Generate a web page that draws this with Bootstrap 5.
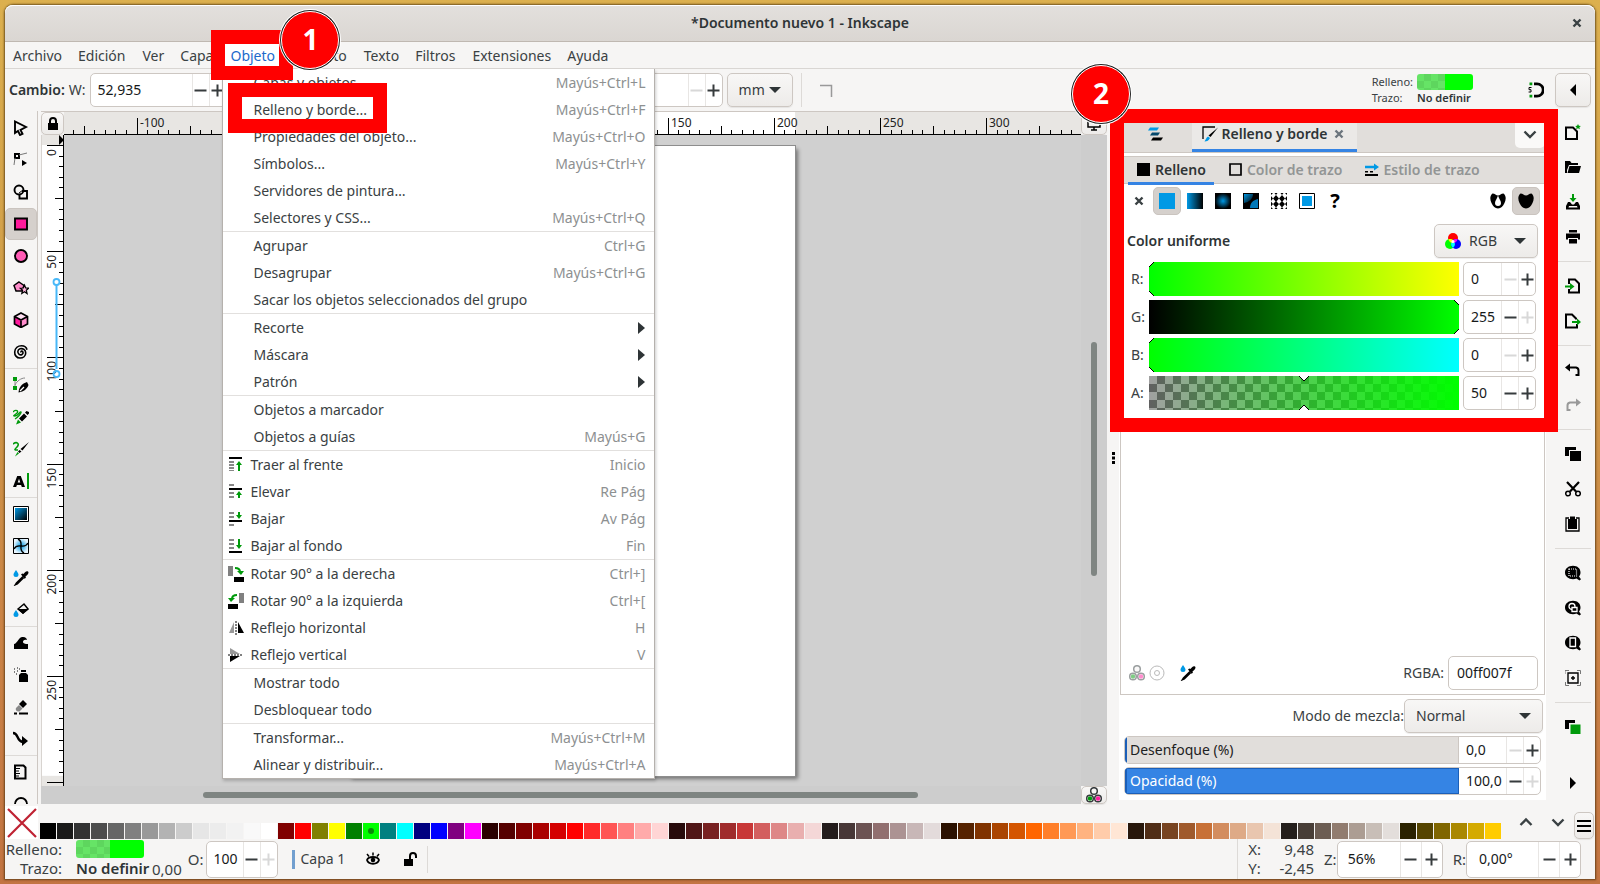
<!DOCTYPE html>
<html lang="es">
<head>
<meta charset="utf-8">
<meta name="viewport" content="width=device-width, initial-scale=1">
<title>*Documento nuevo 1 - Inkscape</title>
<link href="https://cdn.jsdelivr.net/npm/bootstrap@5.3.0/dist/css/bootstrap.min.css" rel="stylesheet">
<style>
  :root { --ink:#3a4143; --line:#cdc7c2; --soft:#dddad7; --bg:#f6f5f4; --blue:#3584e4; --call:#ff0000; }
  body { height:100vh; padding:5px; overflow:hidden; font-family:"Noto Sans",sans-serif; font-size:14px; line-height:20px; color:var(--ink);
    background:linear-gradient(180deg,#dcb04e 0%,#cf9a48 40%,#cb8446 70%,#c27442 100%); }
  button { padding:0; border:0; background:none; color:inherit; }
  svg { display:block; flex:none; }
  a { color:inherit; text-decoration:none; }
  .strong { font-weight:600; color:#2e3436; }
  .ico { width:16px; height:16px; }
  .win { background:var(--bg); border-radius:8px 8px 0 0; box-shadow:0 0 2px 1px rgba(70,45,10,.7); }
  .titlebar { height:37px; border-bottom:1px solid #bfb8b1; background:linear-gradient(#e3e0dd,#dad6d2); border-radius:8px 8px 0 0; box-shadow:inset 0 1px #fff; }
  .titlebar .closer { right:10px; top:10px; }
  .menubar { height:27px; border-bottom:1px solid #d9d6d3; }
  .menubar > div > a { display:block; padding:0 8px; height:26px; line-height:27px; }
  .menubar > div:nth-child(2n) > a { padding-right:9px; }
  .menubar .opened > a { color:#1b6acb; background:#fff; }
  .toolopts { height:42px; }
  .spin { background:#fff; border:1px solid var(--line); border-radius:5px; overflow:hidden; color:#000; height:34px; flex:none; }
  .spin input { border:0; outline:0; background:none; flex:1 1 0; width:0; min-width:0; padding:0 0 0 7px; color:#16191a; }
  .spin button { width:17px; border-left:1px solid #e8e6e4; flex:none; display:flex; align-items:center; justify-content:center; color:#363b3d; }
  .spin button:disabled { color:#d8d8d8; }
  .spin button svg { width:13px; height:13px; }
  .spin.wide button { width:21px; }
  .raised { background:linear-gradient(#f8f7f6,#edebe9); border:1px solid var(--line); border-radius:5px; box-shadow:0 1px 1px rgba(0,0,0,.07); color:#363b3d; }
  select.raised { appearance:none; height:34px; outline:0;
    background:url("data:image/svg+xml,%3Csvg xmlns='http://www.w3.org/2000/svg' width='12' height='6'%3E%3Cpath d='M0 0h12l-6 6z' fill='%232e3436'/%3E%3C/svg%3E") no-repeat right 11px center, linear-gradient(#f8f7f6,#edebe9); }
  select.unit { width:66px; padding:0 11px; }
  .vsep { width:1px; background:var(--soft); }
  .hsep { height:1px; background:var(--soft); flex:none; }
  .tiny { font-size:11px; line-height:16px; }
  .swatch2 { border-radius:3px; overflow:hidden; }
  .swatch2 > span { flex:1; background:#00ff00; }
  .swatch2 > span:first-child { background:conic-gradient(#5ed65e 25%,#66e466 0 50%,#5ed65e 0 75%,#66e466 0) 0 0/14px 14px; }
  /* tool columns */
  .toolbox { width:33px; border-right:1px solid var(--line); overflow:hidden; padding-top:1px; }
  .toolbox button { height:32px; width:32px; flex:none; display:flex; align-items:center; justify-content:center; }
  .toolbox .picked { background:#d5d0cc; border:1px solid #cac4bf; border-radius:5px; }
  .commands { width:49px; padding:3px 4px 0 9px; }
  .commands button { height:35px; display:flex; align-items:center; justify-content:center; flex:none; }
  .commands .hsep { margin:7px 0 6px; }
  /* canvas */
  .sheet { display:grid; grid-template-columns:23px 1fr 26px; grid-template-rows:23px 1fr 18px; border-top:1px solid var(--line); margin-left:3px; min-width:0; }
  .sheet > * { min-width:0; min-height:0; overflow:hidden; }
  .ruler { background:#e8e6e3; }
  .ruler svg { width:100%; height:100%; }
  .ruler text { font-size:12px; fill:#222; }
  .rtop { border-bottom:1px solid #000; }
  .rleft { border-right:1px solid #000; border-left:1px solid #d8d4d0; }
  .board { background:#d0d0d0; position:relative; }
  .paper { position:absolute; left:285px; top:11px; width:446px; height:630px; background:#fff; outline:1px solid #8d8d8d; box-shadow:3px 3px 4px rgba(0,0,0,.45); }
  .strip { background:#cdcdcd; }
  .thumb { background:#7f8582; border-radius:3px; }
  /* object menu */
  .popmenu { position:absolute; left:0; top:27px; width:433px; z-index:20; background:#fff; border:1px solid #b5b1ad; border-top:0; box-shadow:1px 2px 3px rgba(0,0,0,.2); }
  .popmenu a { display:flex; align-items:center; height:27px; padding:0 9px 0 30px; position:relative; }
  .popmenu a.pic { padding-left:5px; gap:6px; }
  .popmenu kbd { margin-left:auto; font:inherit; background:none; color:#8d9091; padding:0; }
  .popmenu hr { margin:0; border:0; height:1px; background:#e2e0de; opacity:1; }
  /* callouts */
  .frame { position:absolute; border:14px solid var(--call); pointer-events:none; z-index:30; }
  .disc { position:absolute; width:58px; height:58px; border-radius:50%; background:var(--call); color:#fff; font:700 28px/54px "Noto Sans",sans-serif; text-align:center; border:1px solid #fff; box-shadow:0 0 0 1px #222,0 0 0 2px #fff; z-index:40; }
  /* dock */
  .dock { width:427px; background:#fff; position:relative; }
  .tabs1 { height:42px; background:#e1dedb; border-bottom:1px solid var(--line); }
  .tabs1 .on { width:165px; background:#ebe9e7; box-shadow:inset 0 -3px var(--blue); padding-top:5px; }
  .tabs2 { height:28px; margin-top:3px; padding-left:7px; background:#e1dedb; border-bottom:1px solid var(--line); border-top:1px solid var(--line); }
  .tabs2 button { color:#929595; display:flex; align-items:center; gap:3px; padding:0 8px 0 14px; }
  .tabs2 .on { color:#2e3436; padding:0 8px; box-shadow:0 2px var(--blue),inset 0 -1px var(--blue); }
  .panel { border:1px solid var(--line); border-top:0; margin:0 1px; }
  .paint { margin-top:3px; }
  .paint button { width:28px; height:28px; display:flex; align-items:center; justify-content:center; }
  .paint .picked { background:#d5d0cc; border-radius:5px; border:1px solid #cac4bf; }
  .chan { height:34px; flex:1; overflow:hidden; min-width:0; }
  .chan input { appearance:none; display:block; width:calc(100% + 12px); margin:0 -6px; height:34px; background:none; outline:0; }
  .chan input::-webkit-slider-thumb { appearance:none; width:12px; height:34px; background:url("data:image/svg+xml,%3Csvg xmlns='http://www.w3.org/2000/svg' width='12' height='34'%3E%3Cpath d='M.5-.5h11L6 5zM.5 34.5h11L6 29z' fill='%23fff' stroke='%23000'/%3E%3C/svg%3E"); }
  .chan input::-moz-range-thumb { width:12px; height:34px; border:0; background:none; }
  .c-r { background:linear-gradient(90deg,#0f0,#ff0); } .c-g { background:linear-gradient(90deg,#000,#0f0); }
  .c-b { background:linear-gradient(90deg,#0f0,#0ff); }
  .c-a { background:linear-gradient(90deg,rgba(0,255,0,0),#0f0),conic-gradient(#606060 25%,#a0a0a0 0 50%,#606060 0 75%,#a0a0a0 0) 0 0/16px 16px; }
  .bars { padding:3px 5px 5px 5px; gap:3px; }
  .spin.bar { height:28px; }
  .bar label { flex:1; padding-left:3px; line-height:25px; background:#e1dedb; border-left:2px solid #1b5fb8; border-right:1px solid var(--line); color:#1d2122; }
  .bar.full label { background:var(--blue); color:#fff; outline:1px solid #1b5fb8; outline-offset:-1px; border-color:#1b5fb8; }
  .bar input { flex:0 0 47px; }
  /* palette + status */
  .palette { height:35px; }
  .palette .none { width:33px; height:33px; background:#fff; }
  .chips { gap:1px; margin-left:2px; }
  .chips button { width:16px; height:16px; position:relative; flex:none; }
  .chips .cur::after { content:""; position:absolute; left:5px; top:5px; width:6px; height:6px; border-radius:50%; background:#0a8a0a; }
  .status { height:40px; }
  .status .spin { height:37px; }
  .two { line-height:19px; font-size:15px; }
  .names { width:57px; }
  .indic { width:76px; }
</style>
</head>
<body>
<svg width="0" height="0" class="position-absolute" aria-hidden="true">
  <defs>
    <linearGradient id="gB"><stop offset="0" stop-color="#0099e5"/><stop offset="1" stop-color="#000"/></linearGradient>
    <linearGradient id="gD" x2="1" y2="1"><stop offset="0" stop-color="#0099e5"/><stop offset="1" stop-color="#000"/></linearGradient>
    <radialGradient id="gR"><stop offset="0" stop-color="#0099e5"/><stop offset="1" stop-color="#000"/></radialGradient>
    <radialGradient id="gM"><stop offset="0" stop-color="#0099e5"/><stop offset="1" stop-color="#e8f6ff"/></radialGradient>
    <symbol id="minus" viewBox="0 0 13 13"><path d="M.5 5.500h12v2H.5z" fill="currentColor"/></symbol>
    <symbol id="plus" viewBox="0 0 13 13"><path d="M.5 5.500h5v-5h2v5h5v2h-5v5h-2v-5h-5z" fill="currentColor"/></symbol>
    <symbol id="cross" viewBox="0 0 16 16"><path d="M4.500 4.500l7 7m0-7l-7 7" stroke="currentColor" stroke-width="2.400"/></symbol>
    <symbol id="chevd" viewBox="0 0 16 16"><path d="M2.500 5.500L8 11l5.500-5.500" fill="none" stroke="currentColor" stroke-width="2.400"/></symbol>
    <symbol id="chevu" viewBox="0 0 16 16"><path d="M2.500 11L8 5.500 13.500 11" fill="none" stroke="currentColor" stroke-width="2.400"/></symbol>
    <symbol id="dropper" viewBox="0 0 16 16"><path d="M3 0c1.500 2.200 2.500 3.300 2.500 4.600a2.500 2.500 0 0 1-5 0C.5 3.300 1.500 2.200 3 0z" fill="#0099e5"/><path d="M10 6.500L3.500 13l-1 1.600 1.800-.8L10.800 7.500" fill="#fff" stroke="#000" stroke-width="1.600"/><path d="M8 4.500l1.300-1 1 .6C11.500 2.500 13 .8 14.500 1.200c1.800.8.800 2.800-.3 3.800l-1.700 1.600.4 1.200-1.300 1z"/></symbol>
    <symbol id="cms" viewBox="0 0 16 16"><g stroke-width="1.500" stroke="currentColor"><circle cx="8" cy="4" r="3.300" fill="#f6f5f4"/><circle cx="4" cy="11.500" r="3.300" fill="#fff"/><circle cx="12" cy="11.500" r="3.300" fill="#fff"/></g><circle cx="4" cy="11.500" r="2.200" fill="#009a0b"/><circle cx="12" cy="11.500" r="2.200" fill="#ff1a9c"/></symbol>
    <symbol id="mag" viewBox="0 0 16 16"><path d="M8 .8C3.500.8 0 3.600 0 7.500s3.500 6.700 8 6.700c1.300 0 2.500-.2 3.500-.7l3 2 1.500-1.300-2-2.700c1.200-1.200 1.500-2.500 1.500-4C15.500 3.600 12.500.8 8 .8z"/></symbol>
  </defs>
</svg>

<div class="win d-flex flex-column h-100 position-relative">
  <header class="titlebar d-flex align-items-center justify-content-center position-relative flex-shrink-0">
    <span class="strong">*Documento nuevo 1 - Inkscape</span>
    <button class="closer position-absolute" aria-label="Cerrar"><svg class="ico"><use href="#cross"/></svg></button>
  </header>

  <nav class="menubar d-flex flex-shrink-0" aria-label="Menú principal">
    <div><a href="#">Archivo</a></div>
    <div><a href="#">Edición</a></div>
    <div><a href="#">Ver</a></div>
    <div><a href="#">Capa</a></div>
    <div class="opened position-relative"><a href="#">Objeto</a>
      <div class="popmenu" id="popmenu"></div>
      <div class="frame" style="left:-11px;top:-12px;width:82px;height:50px"></div>
      <div class="disc" style="left:59px;top:-31px">1</div>
    </div>
    <div><a href="#">Trayecto</a></div>
    <div><a href="#">Texto</a></div>
    <div><a href="#">Filtros</a></div>
    <div><a href="#">Extensiones</a></div>
    <div><a href="#">Ayuda</a></div>
  </nav>

  <div class="toolopts d-flex align-items-center flex-shrink-0 ps-1">
    <span class="strong me-1">Cambio:</span><label for="w">W:</label>
    <div class="spin d-flex ms-1" style="width:137px"><input id="w" value="52,935"><button aria-label="Menos"><svg><use href="#minus"/></svg></button><button aria-label="Más"><svg><use href="#plus"/></svg></button></div>
    <div class="spin d-flex" style="width:137px;margin-left:359px"><input aria-label="Ry" value=""><button disabled aria-label="Menos"><svg><use href="#minus"/></svg></button><button aria-label="Más"><svg><use href="#plus"/></svg></button></div>
    <select class="raised unit ms-1" aria-label="Unidad"><option>mm</option></select>
    <div class="vsep ms-2 align-self-stretch my-1"></div>
    <button class="ms-3" aria-label="Sin redondeo"><svg class="ico" viewBox="0 0 16 16"><path d="M2 3.500h11.500V15" fill="none" stroke="#999" stroke-width="1.500"/></svg></button>
    <div class="ms-auto d-flex align-items-center">
      <div class="tiny me-1"><div>Relleno:</div><div>Trazo:</div></div>
      <div class="tiny"><div class="swatch2 d-flex" style="width:56px;height:16px"><span></span><span></span></div><div class="strong">No definir</div></div>
      <svg class="ico" style="margin:0 11px 0 55px" viewBox="0 0 16 16"><path d="M6 1.800H9a6.200 6.200 0 0 1 0 12.400H6" fill="none" stroke="#000" stroke-width="2.800"/><path d="M1.500.4h2.800v2.800H1.500zM1.500 12.800h2.800v2.800H1.500z" fill="#009a0b"/><path d="M3.500 5.500H1v2.200h2V10H.6" fill="none" stroke="#000"/></svg>
      <button class="raised d-flex align-items-center justify-content-center" style="width:36px;height:34px;margin-right:4px" aria-label="Plegar"><svg width="6" height="12"><path d="M6 0v12L0 6z"/></svg></button>
    </div>
  </div>

  <main class="d-flex flex-grow-1" style="min-height:0">
    <div class="toolbox d-flex flex-column flex-shrink-0" id="toolbox"></div>

    <section class="sheet flex-grow-1">
      <button class="raised d-flex align-items-center justify-content-center" aria-label="Bloquear guías"><svg class="ico" viewBox="0 0 16 16"><path d="M3 7h10v7H3z"/><path d="M5 7V5a3 3 0 0 1 6 0v2" fill="none" stroke="#000" stroke-width="2"/></svg></button>
      <div class="ruler rtop"><svg id="rtop"></svg></div>
      <button class="raised d-flex align-items-center justify-content-center" aria-label="Modo de vista"><svg class="ico" viewBox="0 0 16 16"><path d="M2 3h12v8H2zM5 14h6M8 11v3" fill="none" stroke="#000" stroke-width="1.500"/></svg></button>
      <div class="ruler rleft position-relative"><svg id="rleft"></svg></div>
      <div class="board"><div class="paper"></div></div>
      <div class="strip d-flex justify-content-center"><div class="thumb" style="width:6px;height:234px;margin-top:207px"></div></div>
      <div class="strip"></div>
      <div class="strip d-flex"><div class="thumb" style="width:715px;height:6px;margin:6px 0 0 139px"></div></div>
      <button class="raised d-flex align-items-center justify-content-center" aria-label="Gestión de color"><svg class="ico"><use href="#cms"/></svg></button>
    </section>

    <div class="d-flex align-items-center justify-content-center flex-shrink-0" style="width:12px"><svg width="3" height="12"><path d="M0 0h3v3H0zM0 4.500h3v3H0zM0 9h3v3H0z"/></svg></div>

    <aside class="dock d-flex flex-column flex-shrink-0 mb-1">
      <div class="tabs1 d-flex flex-shrink-0">
        <button class="d-flex align-items-center justify-content-center pt-1" style="width:73px" aria-label="Capas"><svg class="ico" viewBox="0 0 16 16"><path d="M2 1.500h9l-2 3H0z" fill="#0099e5"/><path d="M4 6.500h8l-2 3H2z" fill="#05496d"/><path d="M5 11.500h10l-2 3H3z"/></svg></button>
        <button class="on d-flex align-items-center justify-content-center strong"><svg class="ico me-1" viewBox="0 0 16 16"><path d="M1 13V1h12" fill="none" stroke="#000" stroke-width="1.300"/><path d="M16 1.500L8.500 11 6.500 9.500z"/><path d="M6 10.500l2 1.500c-1 2.500-3 3.500-5.500 3.500C4 13.500 4 11.500 6 10.500z" fill="#0099e5"/></svg>Relleno y borde<svg class="ico ms-1 text-secondary"><use href="#cross"/></svg></button>
        <button class="ms-auto d-flex align-items-center justify-content-center" style="width:30px;margin-right:1px;background:#faf9f8;border-radius:5px;height:37px" aria-label="Diálogos"><svg class="ico mt-2"><use href="#chevd"/></svg></button>
      </div>
      <div class="panel d-flex flex-column flex-grow-1">
        <div class="tabs2 d-flex align-items-stretch flex-shrink-0">
          <button class="on strong"><svg class="ico" viewBox="0 0 16 16"><path d="M1 1h13v13H1z"/></svg>Relleno</button>
          <button class="fw-semibold"><svg class="ico" viewBox="0 0 16 16"><path d="M2 2h11v11H2z" fill="none" stroke="#000" stroke-width="1.700"/></svg>Color de trazo</button>
          <button class="fw-semibold"><svg class="ico" viewBox="0 0 16 16"><path d="M1 3.800h9V1.500l5 3.500-5 3.500V6.200H1z" fill="#0099e5"/><path d="M1 9h3v1.500H1zM6 9h3v1.500H6zM1 12h13v2H1z"/></svg>Estilo de trazo</button>
        </div>
        <div class="paint d-flex px-1">
          <button aria-label="Sin pintura"><svg class="ico"><use href="#cross"/></svg></button>
          <button class="picked" aria-label="Color uniforme"><svg class="ico"><path d="M0 0h16v16H0z" fill="#0099e5"/></svg></button>
          <button aria-label="Degradado lineal"><svg class="ico"><path d="M0 0h16v16H0z" fill="url(#gB)"/></svg></button>
          <button aria-label="Degradado radial"><svg class="ico"><path d="M0 0h16v16H0z" fill="url(#gR)"/></svg></button>
          <button aria-label="Malla"><svg class="ico"><path d="M0 0h16v16H0z"/><path d="M1 1h9c0 5-4 8-9 9z" fill="url(#gD)"/><path d="M15 6v9H7c0-5 3-8 8-9z" fill="#0077b8"/></svg></button>
          <button aria-label="Patrón"><svg class="ico"><path d="M0 0h2L0 2zM3.500 0h3L5 2zM9.500 0h3L11 2zM14 0h2v2zM5 2l3 3.500L5 9 2 5.500zM11 2l3 3.500L11 9 8 5.500zM0 3l2 2.500L0 8zM16 3l-2 2.500L16 8zM5 8l3 3-3 3.500L2 11zM11 8l3 3-3 3.500L8 11zM0 8.500L2 11l-2 2.500zM16 8.500L14 11l2 2.500zM0 14l2 2H0zM16 14l-2 2h2zM5 14l1.500 2h-3zM11 14l1.500 2h-3z"/></svg></button>
          <button aria-label="Muestra"><svg class="ico"><path d="M.5.5h15v15H.5z" fill="#fff" stroke="#000"/><path d="M3 3h10v10H3z" fill="#0099e5"/></svg></button>
          <button class="fw-bold text-black fs-5" aria-label="Sin definir">?</button>
          <button class="ms-auto" aria-label="Par-impar"><svg class="ico"><path d="M2.500.5C5 .5 6 2.500 8 2.500S11 .5 13.500.5c3 2.500 2.500 6.500 1 9.500S11 15.500 8 15.500 3 13 1.500 10-.5 3 2.500.5z"/><path d="M8 2.500C7 6 5 7.500 5 10a3 3 0 0 0 6 0c0-2.500-2-4-3-7.500z" fill="#fff"/></svg></button>
          <button class="picked" aria-label="No nulo"><svg class="ico"><path d="M2.500.5C5 .5 6 2.500 8 2.500S11 .5 13.500.5c3 2.500 2.500 6.500 1 9.500S11 15.500 8 15.500 3 13 1.500 10-.5 3 2.500.5z"/></svg></button>
        </div>
        <div class="d-flex align-items-center justify-content-between mb-1" style="padding:9px 6px 0">
          <span class="strong">Color uniforme</span>
          <div class="position-relative"><svg class="ico position-absolute" style="left:11px;top:9px" viewBox="0 0 16 16"><circle cx="8" cy="5" r="5" fill="#f00"/><circle cx="5" cy="11" r="5" fill="#0f0"/><circle cx="11" cy="11" r="5" fill="#00f"/><path d="M8 7a5 5 0 0 1 0 8 5 5 0 0 1 0-8z" fill="#0ff"/><path d="M8 7a5 5 0 0 1 4.600-.7A5 5 0 0 1 8 10z" fill="#f0f"/><path d="M8 7a5 5 0 0 0-4.600-.7A5 5 0 0 0 8 10z" fill="#ff0"/><circle cx="8" cy="8.500" r="1.500" fill="#fff"/></svg>
            <select class="raised" style="width:104px;padding:0 0 0 34px" aria-label="Modo de color"><option>RGB</option></select></div>
        </div>
        <div class="d-flex flex-column gap-1" style="padding:0 8px 0 10px" id="chans"></div>
        <div class="d-flex align-items-center mt-auto mb-1 ps-2" style="padding-right:6px">
          <svg class="ico opacity-50 me-1"><use href="#cms"/></svg>
          <svg class="ico opacity-50" viewBox="0 0 16 16" fill="none" stroke="#777"><circle cx="8" cy="8" r="7"/><circle cx="8" cy="8" r="2.500"/></svg>
          <button style="margin-left:15px" aria-label="Cuentagotas"><svg class="ico"><use href="#dropper"/></svg></button>
          <label class="ms-auto me-1" for="rgba">RGBA:</label>
          <div class="spin d-flex" style="width:90px"><input id="rgba" class="ps-2" value="00ff007f"></div>
        </div>
      </div>
      <div class="d-flex align-items-center justify-content-end mt-1" style="padding-right:3px"><label for="blend">Modo de mezcla:</label><select id="blend" class="raised" style="width:139px;padding:0 0 0 11px"><option>Normal</option></select></div>
      <div class="bars d-flex flex-column">
        <div class="spin bar d-flex"><label for="blur">Desenfoque (%)</label><input id="blur" value="0,0"><button disabled aria-label="Menos"><svg><use href="#minus"/></svg></button><button aria-label="Más"><svg><use href="#plus"/></svg></button></div>
        <div class="spin bar full d-flex"><label for="opac">Opacidad (%)</label><input id="opac" value="100,0"><button aria-label="Menos"><svg><use href="#minus"/></svg></button><button disabled aria-label="Más"><svg><use href="#plus"/></svg></button></div>
      </div>
      <div class="frame" style="left:-9px;top:-2px;width:448px;height:323px"></div>
      <div class="disc" style="left:-47px;top:-46px">2</div>
    </aside>

    <div class="commands d-flex flex-column flex-shrink-0" id="commands"></div>
  </main>

  <div class="palette d-flex flex-shrink-0 align-items-end">
    <button class="none" aria-label="Ninguno"><svg width="33" height="33"><path d="M3 3l28 28M31 3L3 31" stroke="#bf2233" stroke-width="2.200"/></svg></button>
    <div class="chips d-flex" id="chips"></div>
    <div class="d-flex ms-auto align-self-center gap-3"><button aria-label="Arriba"><svg class="ico"><use href="#chevu"/></svg></button><button aria-label="Abajo"><svg class="ico"><use href="#chevd"/></svg></button></div>
    <button class="raised ms-2 d-flex align-items-center justify-content-center" style="width:20px;height:27px;margin-right:1px" aria-label="Menú de paleta"><svg width="14" height="14"><path d="M0 1h14v2H0zM0 6h14v2H0zM0 11h14v2H0z"/></svg></button>
  </div>

  <footer class="status d-flex align-items-center flex-shrink-0">
    <div class="names two text-end"><div>Relleno:</div><div>Trazo:</div></div>
    <div class="indic two" style="margin-left:14px"><div class="swatch2 d-flex" style="width:68px;height:18px;margin-bottom:1px"><span></span><span></span></div><div class="strong text-nowrap">No definir</div></div>
    <span class="two align-self-end">0,00</span>
    <label class="two" style="margin-left:6px" for="op">O:</label>
    <div class="spin d-flex" style="width:72px;margin-left:2px"><input id="op" value="100"><button aria-label="Menos"><svg><use href="#minus"/></svg></button><button disabled aria-label="Más"><svg><use href="#plus"/></svg></button></div>
    <span style="width:3px;height:19px;background:#729fcf;margin:0 6px 0 14px"></span><span>Capa 1</span>
    <button style="margin-left:20px" aria-label="Visible"><svg class="ico" viewBox="0 0 16 16"><path d="M2 9c1.500-4 10.500-4 12 0-1.500 5-10.500 5-12 0z" fill="none" stroke="#000" stroke-width="1.800"/><circle cx="8" cy="9" r="2.300"/><path d="M2 3l2 2.500M8 1.500v3M14 3l-2 2.500" stroke="#000" stroke-width="1.500"/></svg></button>
    <button style="margin-left:21px" aria-label="Desbloqueada"><svg class="ico" viewBox="0 0 16 16"><path d="M2 8h9v7H2z"/><path d="M8 8V5a3 3 0 0 1 6 0v2" fill="none" stroke="#000" stroke-width="2"/></svg></button>
    <div class="vsep my-1" style="height:27px;margin-left:9px"></div>
    <div class="vsep ms-auto align-self-stretch"></div>
    <div class="two" style="margin-left:10px"><div>X:</div><div>Y:</div></div>
    <div class="two text-end" style="width:53px"><div>9,48</div><div>-2,45</div></div>
    <label class="two" style="margin-left:10px" for="z">Z:</label>
    <div class="spin wide d-flex" style="width:106px"><input id="z" value="56%" style="padding-left:10px"><button aria-label="Menos"><svg><use href="#minus"/></svg></button><button aria-label="Más"><svg><use href="#plus"/></svg></button></div>
    <label class="two" style="margin-left:10px" for="rot">R:</label>
    <div class="spin wide d-flex" style="width:115px;margin-right:14px"><input id="rot" value="0,00°" style="padding-left:12px"><button aria-label="Menos"><svg><use href="#minus"/></svg></button><button aria-label="Más"><svg><use href="#plus"/></svg></button></div>
  </footer>
</div>

<script>
const svg = (inner, cls = 'ico') => `<svg class="${cls}" viewBox="0 0 16 16">${inner}</svg>`;
const G = '#009a0b', P = '#ff1a9c';

// Object menu
const pics = {
  front: `<path d="M1 0h13v2H1z"/><path d="M1 4h5v2H1zM1 7h5v2H1zM1 10h5v2H1zM1 13h5v1H1z" fill="#888"/><path d="M10 14V8H8l3-4 3 4h-2v6z" fill="${G}"/>`,
  up: `<path d="M1 4h13v2H1z"/><path d="M1 0h5v2H1zM1 8h5v2H1zM1 12h5v2H1z" fill="#888"/><path d="M10 14v-3H8l3-4 3 4h-2v3z" fill="${G}"/>`,
  down: `<path d="M1 9h13v2H1z"/><path d="M1 1h5v2H1zM1 5h5v2H1zM1 13h5v2H1z" fill="#888"/><path d="M10 1v3H8l3 4 3-4h-2V1z" fill="${G}"/>`,
  back: `<path d="M1 13h13v2H1z"/><path d="M1 1h5v2H1zM1 5h5v2H1zM1 9h5v2H1z" fill="#888"/><path d="M10 1v6H8l3 4 3-4h-2V1z" fill="${G}"/>`,
  cw: `<path d="M0 0h5v10H0z" fill="#808080"/><path d="M6 11h10v5H6z"/><path d="M7 2c4 0 5 2 5 4" fill="none" stroke="${G}" stroke-width="2"/><path d="M9 5h7l-3 4z" fill="${G}"/>`,
  ccw: `<path d="M11 0h5v10h-5z" fill="#808080"/><path d="M0 11h10v5H0z"/><path d="M9 2C5 2 4 4 4 6" fill="none" stroke="${G}" stroke-width="2"/><path d="M0 5h7L3 9z" fill="${G}"/>`,
  fh: `<path d="M6 2v11H1z" fill="#999"/><path d="M10 2v11h6z"/><path d="M8 1v14" stroke="#000" stroke-dasharray="2 1"/>`,
  fv: `<path d="M2 1v6h10z" fill="#999"/><path d="M2 9h10L2 15z"/><path d="M0 8h14" stroke="#000" stroke-dasharray="2 1"/>`
};
const menu = [
  ['Capas y objetos...', 'Mayús+Ctrl+L'], ['Relleno y borde...', 'Mayús+Ctrl+F'], ['Propiedades del objeto...', 'Mayús+Ctrl+O'],
  ['Símbolos...', 'Mayús+Ctrl+Y'], ['Servidores de pintura…', ''], ['Selectores y CSS...', 'Mayús+Ctrl+Q'], 0,
  ['Agrupar', 'Ctrl+G'], ['Desagrupar', 'Mayús+Ctrl+G'], ['Sacar los objetos seleccionados del grupo', ''], 0,
  ['Recorte', '>'], ['Máscara', '>'], ['Patrón', '>'], 0,
  ['Objetos a marcador', ''], ['Objetos a guías', 'Mayús+G'], 0,
  ['Traer al frente', 'Inicio', 'front'], ['Elevar', 'Re Pág', 'up'], ['Bajar', 'Av Pág', 'down'], ['Bajar al fondo', 'Fin', 'back'], 0,
  ['Rotar 90° a la derecha', 'Ctrl+]', 'cw'], ['Rotar 90° a la izquierda', 'Ctrl+[', 'ccw'], ['Reflejo horizontal', 'H', 'fh'], ['Reflejo vertical', 'V', 'fv'], 0,
  ['Mostrar todo', ''], ['Desbloquear todo', ''], 0,
  ['Transformar...', 'Mayús+Ctrl+M'], ['Alinear y distribuir...', 'Mayús+Ctrl+A']
];
document.getElementById('popmenu').innerHTML = menu.map((m, i) => {
  if (!m) return '<hr>';
  const key = m[1] === '>' ? '<svg class="ms-auto" width="7" height="12"><path d="M0 0l7 6-7 6z" fill="#2e3436"/></svg>' : `<kbd>${m[1]}</kbd>`;
  const mark = i === 1 ? '<span class="frame" style="left:5px;top:-13px;width:159px;height:50px"></span>' : '';
  return `<a href="#"${m[2] ? ' class="pic"' : ''}>${m[2] ? svg(pics[m[2]]) : ''}${m[0]}${key}${mark}</a>`;
}).join('');

// Left tool column
const tools = [
  ['Seleccionar', `<path d="M2 1.500v11.500l3-2 2 4 2.500-1.200-2-3.800L13 7z" fill="none" stroke="#000" stroke-width="1.900"/>`],
  ['Nodos', `<path d="M2 2h4v4H2z" fill="none" stroke="#000" stroke-width="2"/><path d="M6 3l8-2M2 6L1 13" stroke="#777" fill="none"/><path d="M9 8l5 3-5 3z"/>`],
  ['Constructor de formas', `<circle cx="6" cy="6" r="4.500" fill="none" stroke="#000" stroke-width="1.900"/><path d="M9 7h5v7.500H6.500V10" fill="none" stroke="#000" stroke-width="1.900"/><path d="M6 9l4-3" stroke="#000"/>`],
  ['Rectángulo', `<path d="M2 2.500h12v11H2z" fill="${P}" stroke="#000" stroke-width="1.900"/>`, 1],
  ['Elipse', `<circle cx="8" cy="8" r="6" fill="#ff5bb5" stroke="#000" stroke-width="1.900"/>`],
  ['Estrella', `<path d="M6 2l5 3.500L9 11H3L1 5.500z" fill="#ff8ccb" stroke="#000" stroke-width="1.500"/><path d="M11.500 5l1.200 3 3 .2-2.400 2 .8 3.300-2.600-1.800-2.700 1.800.8-3.300-2.300-2 3-.2z" fill="#ffb3dc" stroke="#000" stroke-width="1.200"/>`],
  ['Caja 3D', `<path d="M8 1l6.500 3.500v7.500L8 15.500 1.500 12V4.500z" fill="#ff8ccb"/><path d="M1.500 4.500L8 8v7.500L1.500 12z" fill="${P}"/><path d="M8 1l6.500 3.500L8 8 1.500 4.500z" fill="#ffe0f2"/><path d="M8 1l6.500 3.500v7.500L8 15.500 1.500 12V4.500zM1.500 4.500L8 8l6.500-3.500M8 8v7.500" fill="none" stroke="#000" stroke-width="1.700"/>`],
  ['Espiral', `<path d="M8 8.500c-.5-1.500 1.500-2 2-.3.500 2-2 3.300-3.700 2.300C4 9 4.500 5.500 7 4.800c3-.8 5.700 1.200 5.700 4.200 0 3-2.500 5-5.700 5C3.500 14 1.500 11 1.700 8 2 4 5 1.700 8.500 1.700c3 0 5 1.800 5.500 4" fill="none" stroke="#000" stroke-width="1.600"/>`], 0,
  ['Pluma', `<path d="M2 2v9M2 8C4 4 8 1 12 1" stroke="#888" fill="none"/><path d="M0 0h4v4H0zM0 9h4v4H0z" fill="${G}"/><path d="M5.500 15.500C6 10 9 6.500 14 5l1.500 3C14 12 11 14.500 5.500 15.500z"/><path d="M7 14l4-4" stroke="#fff" stroke-width="1.300"/>`],
  ['Lápiz', `<path d="M0 3c3-3 6-1 4 1S-1 7 2 7s5-5 6-4-4 6-6 7" fill="none" stroke="${G}" stroke-width="1.300"/><path d="M6 9.500l5-5 3 3-5 5zM12 3.500l1.500-1.500 2.500 1v1.500L14.500 6z"/><path d="M5 10.500l3 3-5 2z" fill="${G}"/>`],
  ['Caligrafía', `<path d="M0 3c4-3 7 0 4 3S1 9 5 9" fill="none" stroke="${G}" stroke-width="1.600"/><path d="M16 1L9.500 9.500l-2-1.500zM6.500 9l2 1.500L6.500 12 5 10.500z"/><path d="M4.500 11l1.500 1.500-4 3z" fill="${G}"/>`],
  ['Texto', `<path d="M0 14L4.200 3h3.600L12 14H8.800l-.7-2H3.900l-.7 2zM4.700 9.500h2.600L6 5.700z"/><path d="M14 0h2v16h-2z" fill="${G}"/>`], 0,
  ['Degradado', `<path d="M.5.5h15v15H.5z" fill="#fff" stroke="#000"/><path d="M2 2h12v12H2z" fill="url(#gD)"/>`],
  ['Malla', `<path d="M.5.5h15v15H.5z" fill="url(#gM)" stroke="#000"/><path d="M5 1c4 2 3 5 3 7s-1 5 3 7M1 11c2-4 5-3 7-3s5 1 7-3" fill="none" stroke="#000" stroke-width="1.400"/>`],
  ['Cuentagotas', `<use href="#dropper"/>`],
  ['Cubo de pintura', `<path d="M3 8c1.500 2.200 2.500 3.300 2.500 4.600a2.500 2.500 0 0 1-5 0C.5 11.300 1.500 10.200 3 8z" fill="#0099e5"/><path d="M5 7l6-5 4 5-5 4z" fill="none" stroke="#000" stroke-width="1.500"/><path d="M5 7h10l-5 5zM10 0l2 3"/>`], 0,
  ['Retocar', `<path d="M1 14V9c3 0 4-6 8-7 3-.5 5 1 5 3-3-1-4 1-4 2 0 1.500 2 2 5 2v5z"/>`],
  ['Pulverizar', `<path d="M6 8l2-2h5l2 2v7H6zM8 3h5v2H8z"/><path d="M1 2h1M4 1h1M1 5h1M4 4h1M6 2h1M3 7h1" stroke="#555" stroke-width="1.500"/>`],
  ['Borrador', `<path d="M10 1l4 4-4 4-4-4z"/><path d="M6 6l3.500 3.500-3 3C4 13 2 11 3 9z" fill="#888"/><path d="M1 13.500h3v2H1zM6 13.500h9v2H6z"/>`],
  ['Conector', `<path d="M0 2c6 0 3 8 10 9" fill="none" stroke="#000" stroke-width="2.400"/><path d="M9 5l6 5-6 5z"/>`], 0,
  ['Medir', `<path d="M2 1.500h8.500l2 2V14.500H2z" fill="none" stroke="#000" stroke-width="2"/><path d="M3 4.500h4M3 7h3M3 9.500h4M3 12h3" stroke="#000"/>`],
  ['Zoom', `<circle cx="8" cy="8" r="6" fill="none" stroke="#000" stroke-width="1.800"/>`]
];
document.getElementById('toolbox').innerHTML = tools.map(t => t ? `<button aria-label="${t[0]}"${t[2] ? ' class="picked"' : ''}>${svg(t[1])}</button>` : '<div class="hsep"></div>').join('');

// Right command column
const doc = 'fill="none" stroke="#000" stroke-width="2"';
const cmds = [
  ['Nuevo', `<path d="M1 3.500h7l4 4V15H1z" ${doc}/><path d="M13 0l.9 1.700 2 .3-1.500 1.300.4 2-1.800-1-1.800 1 .4-2L10.200 2l1.900-.3z" fill="${G}"/>`],
  ['Abrir', `<path d="M0 2h5l1.500 2H13v2H4l-2 5v3H0z"/><path d="M4.500 7H16l-2 7H2.500z"/>`],
  ['Guardar', `<path d="M7 0h2v4h2.500L8 8 4.500 4H7z" fill="${G}"/><path d="M3 8L1 12v3.500h14V12l-2-4h-2l-2 2.500H7L5 8zM4 12h8l.5 1.500h-9z" fill-rule="evenodd"/>`],
  ['Imprimir', `<path d="M4 1h8v2.500H4zM1 4.500h14v6h-2V9H3v1.500H1zM4 10h8v4.500H4z"/>`], 0,
  ['Importar', `<path d="M4 6V1.500h6l4 4V14.500H4V11" ${doc}/><path d="M0 7.500h5V5l4.500 3.500L5 12V9.500H0z" fill="${G}"/>`],
  ['Exportar', `<path d="M12 11v3.500H1v-13h6l4 4v1" ${doc}/><path d="M7 8h5V5.500L16 9l-4 3.500V10H7z" fill="${G}"/>`], 0,
  ['Deshacer', `<path d="M3 5.500h8a3 3 0 0 1 2.500 3V13h-3" fill="none" stroke="#000" stroke-width="2"/><path d="M5 1.500v8L0 5.500z"/>`],
  ['Rehacer', `<path d="M13 5.500H5a3 3 0 0 0-2.500 3V13h3" fill="none" stroke="#999" stroke-width="2"/><path d="M11 1.500v8l5-4z" fill="#999"/>`], 0,
  ['Copiar', `<path d="M0 1h11v3H4v6H0z"/><path d="M5 5h11v10H5z"/>`],
  ['Cortar', `<path d="M2 1l9 9.500M14 1L5 10.500" stroke="#000" stroke-width="2.200"/><circle cx="3" cy="12.500" r="2.300" fill="none" stroke="#000" stroke-width="1.500"/><circle cx="13" cy="12.500" r="2.300" fill="none" stroke="#000" stroke-width="1.500"/>`],
  ['Pegar', `<path d="M4 2H1v13h13V2h-3" fill="none" stroke="#000" stroke-width="1.300"/><path d="M5 .5h5V3h2v10H3V3h2z"/>`], 0,
  ['Zoom a la selección', `<use href="#mag"/><path d="M4 4h7.500v7H4z" fill="none" stroke="#fff" stroke-width="1.200" stroke-dasharray="1 1"/>`],
  ['Zoom al dibujo', `<use href="#mag"/><circle cx="7" cy="6.500" r="3" fill="none" stroke="#fff" stroke-width="1.300"/><path d="M7 7.500h5v4H7z" fill="#000" stroke="#fff" stroke-width="1.300"/>`],
  ['Zoom a la página', `<use href="#mag"/><path d="M5 3h5.500v8.500H5z" fill="none" stroke="#fff" stroke-width="1.300"/>`],
  ['Centrar página', `<path d="M3 3h10v10H3zM8 6v4M6 8h4" fill="none" stroke="#000" stroke-width="1.400"/><path d="M0 4V.5h4M12 .5h3.500V4M15.500 12v3.500H12M4 15.500H.5V12" fill="none" stroke="#777"/>`], 0,
  ['Duplicar', `<path d="M0 1h10v3H4v6H0z"/><path d="M5.500 5.500H15.500v9.500h-10z" fill="${G}"/>`]
];
document.getElementById('commands').innerHTML = cmds.map(c => c ? `<button aria-label="${c[0]}">${svg(c[1])}</button>` : '<div class="hsep"></div>').join('')
  + `<button class="mt-auto mb-1" aria-label="Más">${svg('<path d="M5 2l6 6-6 6z"/>')}</button>`;

// Colour channels
document.getElementById('chans').innerHTML = [['R', 0, 255, 'c-r'], ['G', 255, 255, 'c-g'], ['B', 0, 255, 'c-b'], ['A', 50, 100, 'c-a']].map(([n, v, max, c]) =>
  `<div class="d-flex align-items-center gap-1"><label for="c${n}" style="width:14px">${n}:</label><div class="chan ${c}"><input type="range" id="c${n}" max="${max}" value="${v}"></div>
  <div class="spin d-flex" style="width:73px"><input value="${v}" aria-label="Valor ${n}"><button aria-label="Menos"${v === 0 ? ' disabled' : ''}><svg><use href="#minus"/></svg></button><button aria-label="Más"${v === max ? ' disabled' : ''}><svg><use href="#plus"/></svg></button></div></div>`).join('');

// Palette
const cols = '000000 1a1a1a 333333 4d4d4d 666666 808080 999999 b3b3b3 cccccc e6e6e6 ececec f2f2f2 f9f9f9 ffffff 800000 ff0000 808000 ffff00 008000 00ff00 008080 00ffff 000080 0000ff 800080 ff00ff 2b0000 550000 800000 aa0000 d40000 ff0000 ff2a2a ff5555 ff8080 ffaaaa ffd5d5 280b0b 501616 782121 a02c2c c83737 d35f5f de8787 e9afaf f4d7d7 241c1c 483737 6c5353 916f6f ac9393 c8b7b7 e3dbdb 2b1100 552200 803300 aa4400 d45500 ff6600 ff7f2a ff9955 ffb380 ffccaa ffe6d5 28170b 502d16 784421 a05a2c c87137 d38d5f deaa87 e9c6af f4e3d7 241f1c 483e37 6c5d53 917c6f ac9d93 c8beb7 e3dedb 2b2200 554400 806600 aa8800 d4aa00 ffcc00'.split(' ');
document.getElementById('chips').innerHTML = cols.map((c, i) => `<button aria-label="#${c}"${i === 19 ? ' class="cur"' : ''} style="background:#${c}"></button>`).join('');

// Rulers: 2.124 px per millimetre
const MM = 2.124;
function ruler(id, origin, vertical) {
  const el = document.getElementById(id);
  const length = vertical ? el.clientHeight : el.clientWidth;
  let s = vertical ? `<rect y="${origin}" width="23" height="${297 * MM}" fill="#fff"/>` : `<rect x="${origin}" width="${210 * MM}" height="22" fill="#fff"/>`;
  for (let mm = -200; mm <= 500; mm += 5) {
    const p = Math.round(origin + mm * MM);
    if (p < 0 || p > length) continue;
    const len = mm % 50 === 0 ? 16 : mm % 25 === 0 ? 8 : 4;
    s += vertical ? `<rect x="${21 - len}" y="${p}" width="${len}" height="1"/>` : `<rect x="${p}" y="${22 - len}" width="1" height="${len}"/>`;
    if (len === 16) s += vertical ? `<text text-anchor="end" transform="translate(14 ${p + 4}) rotate(-90)">${mm}</text>` : `<text x="${p + 3}" y="15">${mm}</text>`;
  }
  if (vertical) s += `<path d="M17 0l5 5-5 5z"/><path d="M14.500 150v84" stroke="#48b8f8" stroke-width="2"/><circle cx="14.500" cy="147" r="3" fill="#fff" stroke="#48b8f8" stroke-width="1.800"/><circle cx="14.500" cy="239" r="3" fill="none" stroke="#48b8f8" stroke-width="1.800"/>`;
  el.innerHTML = s;
}
ruler('rtop', 285, false);
ruler('rleft', 10, true);
</script>
<script src="https://cdn.jsdelivr.net/npm/bootstrap@5.3.0/dist/js/bootstrap.bundle.min.js"></script>
</body>
</html>
